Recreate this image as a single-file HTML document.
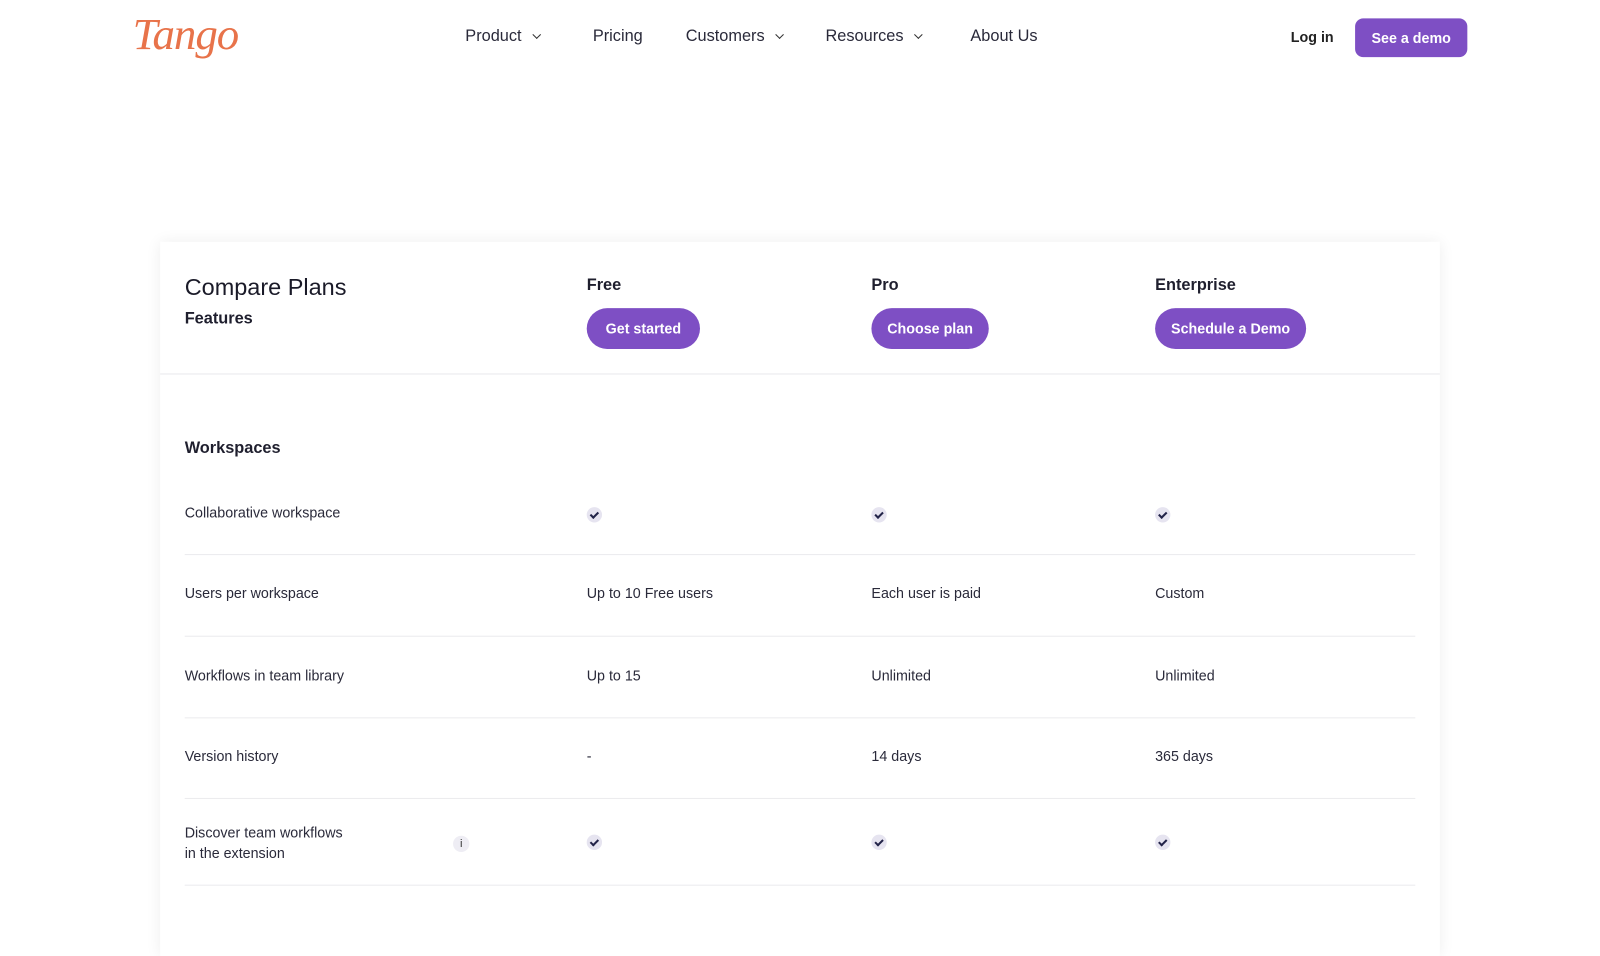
<!DOCTYPE html>
<html><head><meta charset="utf-8"><style>
*{margin:0;padding:0;box-sizing:border-box}
body{width:1600px;height:900px;overflow:hidden;background:#fff;font-family:"Liberation Sans",sans-serif;color:#1f1f2e;position:relative}
#w{position:absolute;left:0;top:0;width:1568px;height:900px;transform:scale(1.0204);transform-origin:0 0}
.abs{position:absolute;white-space:nowrap}
.nav{font-size:16px;color:#2a2a3a;top:27px}
.chev{display:inline-block;width:6px;height:6px;border-right:1.5px solid #333;border-bottom:1.5px solid #333;transform:rotate(45deg);margin-left:12px;position:relative;top:-3px}
.btn{background:#7e4fc4;color:#fff;font-weight:bold;font-size:14px;border-radius:22px;text-align:center}
.card{position:absolute;left:157px;top:237px;width:1254px;height:700px;background:#fff;box-shadow:0 0 14px rgba(0,0,0,0.07)}
.hdr{position:absolute;left:157px;top:366px;width:1254px;height:1px;background:#e8e8ec}
.row{font-size:14px;color:#2a2a3a}
.line{position:absolute;left:181px;width:1206px;height:1px;background:#ebebee}
.chk{position:absolute;width:15px;height:15px;border-radius:50%;background:#e6e4f0}
.chk:after{content:"";position:absolute;left:5px;top:3px;width:3px;height:6px;border-right:2px solid #232449;border-bottom:2px solid #232449;transform:rotate(45deg)}
</style></head><body><div id="w">
<div class="abs" style="left:130px;top:8px;font-family:'Liberation Serif',serif;font-style:italic;font-size:44px;color:#e8734a;letter-spacing:-1px">Tango</div>
<div class="abs nav" style="left:456px">Product<span class="chev"></span></div>
<div class="abs nav" style="left:581px">Pricing</div>
<div class="abs nav" style="left:672px">Customers<span class="chev"></span></div>
<div class="abs nav" style="left:809px">Resources<span class="chev"></span></div>
<div class="abs nav" style="left:951px">About Us</div>
<div class="abs" style="left:1265px;top:28px;font-size:14px;font-weight:bold;color:#222">Log in</div>
<div class="abs btn" style="left:1328px;top:18px;width:110px;height:38px;line-height:38px;border-radius:8px">See a demo</div>
<div class="card"></div>
<div class="hdr"></div>
<div class="abs" style="left:181px;top:268px;font-size:23px;color:#1a1a28">Compare Plans</div>
<div class="abs" style="left:181px;top:304px;font-size:16px;font-weight:bold">Features</div>
<div class="abs" style="left:575px;top:271px;font-size:16px;font-weight:bold">Free</div>
<div class="abs" style="left:854px;top:271px;font-size:16px;font-weight:bold">Pro</div>
<div class="abs" style="left:1132px;top:271px;font-size:16px;font-weight:bold">Enterprise</div>
<div class="abs btn" style="left:575px;top:302px;width:111px;height:40px;line-height:40px">Get started</div>
<div class="abs btn" style="left:854px;top:302px;width:115px;height:40px;line-height:40px">Choose plan</div>
<div class="abs btn" style="left:1132px;top:302px;width:148px;height:40px;line-height:40px">Schedule a Demo</div>
<div class="abs" style="left:181px;top:431px;font-size:16px;font-weight:bold">Workspaces</div>
<div class="abs row" style="left:181px;top:494px">Collaborative workspace</div>
<div class="chk" style="left:575px;top:497px"></div><div class="chk" style="left:854px;top:497px"></div><div class="chk" style="left:1132px;top:497px"></div>
<div class="line" style="top:543px"></div>
<div class="abs row" style="left:181px;top:573px">Users per workspace</div>
<div class="abs row" style="left:575px;top:573px">Up to 10 Free users</div>
<div class="abs row" style="left:854px;top:573px">Each user is paid</div>
<div class="abs row" style="left:1132px;top:573px">Custom</div>
<div class="line" style="top:623px"></div>
<div class="abs row" style="left:181px;top:654px">Workflows in team library</div>
<div class="abs row" style="left:575px;top:654px">Up to 15</div>
<div class="abs row" style="left:854px;top:654px">Unlimited</div>
<div class="abs row" style="left:1132px;top:654px">Unlimited</div>
<div class="line" style="top:703px"></div>
<div class="abs row" style="left:181px;top:733px">Version history</div>
<div class="abs row" style="left:575px;top:733px">-</div>
<div class="abs row" style="left:854px;top:733px">14 days</div>
<div class="abs row" style="left:1132px;top:733px">365 days</div>
<div class="line" style="top:782px"></div>
<div class="abs row" style="left:181px;top:806px;line-height:20px">Discover team workflows<br>in the extension</div>
<div class="abs" style="left:444px;top:819px;width:16px;height:16px;border-radius:50%;background:#eeedf4;font-size:11px;text-align:center;line-height:16px;color:#333">i</div>
<div class="chk" style="left:575px;top:818px"></div><div class="chk" style="left:854px;top:818px"></div><div class="chk" style="left:1132px;top:818px"></div>
<div class="line" style="top:867px"></div>
</div></body></html>
